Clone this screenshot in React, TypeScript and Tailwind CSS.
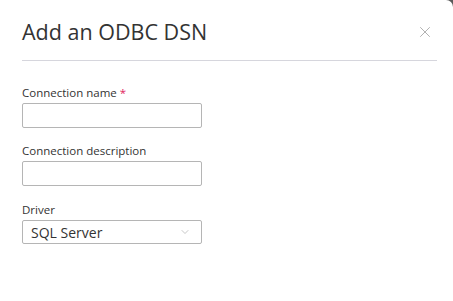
import { X, ChevronDown } from 'lucide-react';

export default function App() {
  return (
    <div className="w-[453px] h-[301px] bg-[#5a5a5a] overflow-hidden">
      <div
        className="w-[453px] h-[301px] bg-white rounded-tr-[7px] text-[#333333]"
        style={{ fontFamily: '"Open Sans", "Noto Sans", sans-serif' }}
      >
        <div className="px-[22px] pr-[16px]">
          <div className="flex items-center justify-between h-[61px] pt-[3px] border-b border-[#d6d6dd]">
            <h1 className="text-[21.5px] leading-none font-normal">Add an ODBC DSN</h1>
            <button className="w-[20px] h-[20px] flex items-center justify-center text-[#8a8a8a] mr-[2px]">
              <X className="w-[18px] h-[18px]" strokeWidth={0.9} />
            </button>
          </div>
        </div>

        <div className="px-[22px] pt-[24px] flex flex-col">
          <label className="text-[11.5px] leading-[15px]">
            Connection name <span className="text-[#e0245e]">*</span>
          </label>
          <input className="mt-[3px] w-[180px] h-[25px] border border-[#b5b5b5] rounded-[2px] px-2 text-[13px] outline-none" />

          <label className="mt-[15px] text-[11.5px] leading-[15px]">Connection description</label>
          <input className="mt-[3px] w-[180px] h-[25px] border border-[#b5b5b5] rounded-[2px] px-2 text-[13px] outline-none" />

          <label className="mt-[16px] text-[11.5px] leading-[15px]">Driver</label>
          <div className="mt-[3px] w-[180px] h-[24px] border border-[#b5b5b5] rounded-[2px] pl-[8px] pr-[10px] flex items-center justify-between">
            <span className="text-[14px]">SQL Server</span>
            <ChevronDown className="w-[12px] h-[12px] text-[#999999]" strokeWidth={1.1} />
          </div>
        </div>
      </div>
    </div>
  );
}
